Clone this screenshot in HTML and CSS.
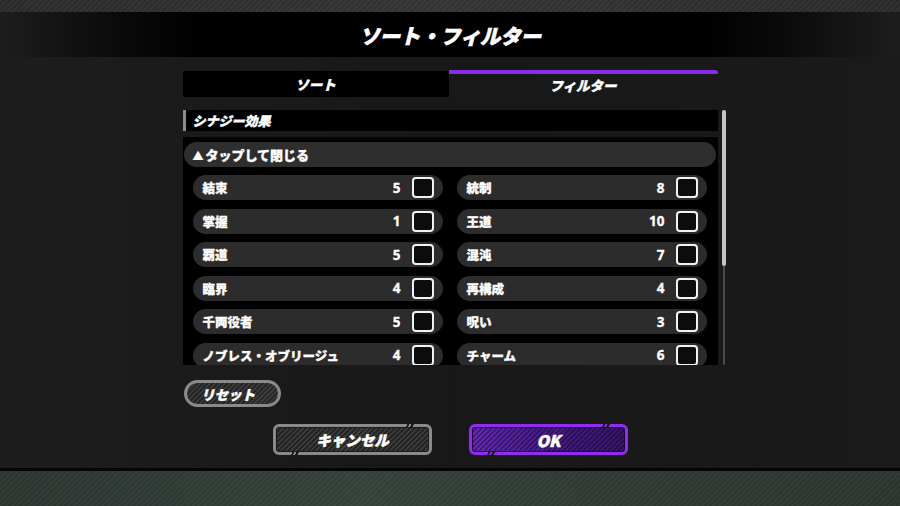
FILE: index.html
```html
<!DOCTYPE html>
<html lang="ja">
<head>
<meta charset="utf-8">
<title>ソート・フィルター</title>
<link rel="stylesheet" href="styles.css">
</head>
<body>
<div class="screen">
  <div class="topstrip"></div>
  <div class="panel">
    <div class="titlebar"><h1 class="title">ソート・フィルター</h1></div>
    <div class="inner">
      <div class="tabs">
        <div class="tab">ソート</div>
        <div class="tab active">フィルター</div>
      </div>
      <div class="content-row">
        <div class="content">
          <div class="sec-head">シナジー効果</div>
          <div class="list">
            <div class="collapse"><span class="tri">▲</span>タップして閉じる</div>
            <div class="grid">
              <div class="item"><span class="label">結束</span><span class="num">5</span><span class="check"></span></div>
              <div class="item"><span class="label">統制</span><span class="num">8</span><span class="check"></span></div>
              <div class="item"><span class="label">掌握</span><span class="num">1</span><span class="check"></span></div>
              <div class="item"><span class="label">王道</span><span class="num">10</span><span class="check"></span></div>
              <div class="item"><span class="label">覇道</span><span class="num">5</span><span class="check"></span></div>
              <div class="item"><span class="label">混沌</span><span class="num">7</span><span class="check"></span></div>
              <div class="item"><span class="label">臨界</span><span class="num">4</span><span class="check"></span></div>
              <div class="item"><span class="label">再構成</span><span class="num">4</span><span class="check"></span></div>
              <div class="item"><span class="label">千両役者</span><span class="num">5</span><span class="check"></span></div>
              <div class="item"><span class="label">呪い</span><span class="num">3</span><span class="check"></span></div>
              <div class="item"><span class="label">ノブレス・オブリージュ</span><span class="num">4</span><span class="check"></span></div>
              <div class="item"><span class="label">チャーム</span><span class="num">6</span><span class="check"></span></div>
            </div>
          </div>
        </div>
        <div class="scrollbar"><div class="thumb"></div></div>
      </div>
      <div class="reset-row"><div class="btn-reset">リセット</div></div>
    </div>
    <div class="actions">
      <div class="btn btn-cancel"><span class="btn-text">キャンセル</span></div>
      <div class="btn btn-ok"><span class="btn-text ok-text">OK</span></div>
    </div>
  </div>
  <div class="panel-edge"></div>
  <div class="ground"></div>
</div>
</body>
</html>
```
FILE: styles.css
```css
* { box-sizing: border-box; }
html, body { margin: 0; padding: 0; }
body {
  width: 900px;
  height: 506px;
  overflow: hidden;
  background: #2e3531;
  font-family: "Noto Sans CJK JP", "Noto Sans", sans-serif;
  color: #fff;
}
.screen {
  width: 900px;
  height: 506px;
  display: flex;
  flex-direction: column;
}
.topstrip {
  height: 12px;
  background:
    repeating-linear-gradient(135deg, rgba(255,255,255,0.04) 0 2px, rgba(0,0,0,0) 2px 4px),
    linear-gradient(to right, #2a2a2a, #333 50%, #2a2a2a);
}
.panel {
  height: 456px;
  background: linear-gradient(to right, #1d1d1d, #181818 50%, #1a1a1a);
  display: flex;
  flex-direction: column;
}
.titlebar {
  height: 45px;
  background: linear-gradient(to right, #1d1d1d 0, #0a0a0a 120px, #000 200px, #000 700px, #0a0a0a 780px, #1d1d1d 900px);
  display: flex;
  align-items: center;
  justify-content: center;
}
.title {
  margin: 0;
  font-size: 20.5px;
  font-weight: 900;
  font-style: italic;
  line-height: 1;
  letter-spacing: -0.3px;
  padding-top: 1px;
  -webkit-text-stroke: 0.6px #fff;
}
.inner {
  width: 535px;
  margin: 13px auto 0;
}
.tabs {
  display: flex;
  height: 27px;
}
.tab {
  flex: 0 0 266px;
  background: #000;
  border-radius: 2px;
  margin-top: 1px;
  display: flex;
  align-items: center;
  justify-content: center;
  font-size: 13.5px;
  font-weight: 900;
  font-style: italic;
  -webkit-text-stroke: 0.4px #fff;
}
.tab.active {
  flex: 0 0 269px;
  background: transparent;
  margin-top: 0;
  border-top: 4px solid #8a2be8;
  border-radius: 0 3px 0 0;
  padding-bottom: 2px;
}
.content-row {
  display: flex;
  gap: 4px;
  margin-top: 13px;
  margin-right: -9px;
}
.content {
  width: 535px;
  flex: 0 0 535px;
}
.sec-head {
  height: 21px;
  background: #000;
  border-left: 3px solid #8c8c8c;
  padding-left: 7px;
  display: flex;
  align-items: center;
  font-size: 13px;
  font-weight: 900;
  font-style: italic;
  -webkit-text-stroke: 0.4px #fff;
}
.list {
  margin-top: 6px;
  height: 228px;
  background: #000;
  overflow: hidden;
  padding: 5px 2px 0 1px;
}
.collapse {
  height: 25px;
  border-radius: 13px;
  background: #2e2e2e;
  display: flex;
  align-items: center;
  padding-left: 9px;
  font-size: 13px;
  font-weight: 900;
  -webkit-text-stroke: 0.3px #fff;
}
.tri {
  font-size: 11px;
  margin-right: 2px;
}
.grid {
  display: grid;
  grid-template-columns: 250px 250px;
  column-gap: 14px;
  row-gap: 8.5px;
  margin: 8px 0 0 9px;
}
.item {
  height: 25px;
  border-radius: 13px;
  background: #2c2c2c;
  display: flex;
  align-items: center;
  padding: 0 9px 0 10px;
}
.label {
  flex: 1;
  font-size: 12.5px;
  font-weight: 900;
  white-space: nowrap;
  -webkit-text-stroke: 0.3px #fff;
}
.num {
  font-size: 13.5px;
  font-weight: 700;
  margin-right: 11px;
  font-family: "Noto Sans", "Noto Sans CJK JP", sans-serif;
  -webkit-text-stroke: 0.3px #fff;
}
.check {
  width: 22px;
  height: 21px;
  border: 2px solid #f2f2f2;
  border-radius: 4px;
  background: #0c0c0c;
}
.scrollbar {
  width: 4px;
  flex: 0 0 4px;
  background: linear-gradient(to right, transparent 1px, #4a4a4a 1px 3px, transparent 3px);
  border-radius: 2px;
}
.thumb {
  height: 156px;
  background: #c4c4c4;
  border-radius: 2px;
}
.reset-row {
  margin-top: 15px;
  padding-left: 1px;
}
.btn-reset {
  width: 97px;
  height: 27px;
  border: 3px solid #8a8a8a;
  border-radius: 14px;
  background: repeating-linear-gradient(135deg, #262626 0 2px, #3c3c3c 2px 3.5px);
  display: flex;
  align-items: center;
  justify-content: center;
  font-size: 13.5px;
  font-weight: 900;
  font-style: italic;
  padding-right: 8px;
  -webkit-text-stroke: 0.4px #fff;
}
.actions {
  margin-top: 17px;
  display: flex;
  justify-content: center;
  gap: 37px;
  padding-left: 1px;
}
.btn {
  width: 159px;
  height: 31px;
  border: 3px solid #8a8a8a;
  border-radius: 6px;
  display: flex;
  align-items: center;
  justify-content: center;
  position: relative;
  font-size: 14.5px;
  font-weight: 900;
  font-style: italic;
  -webkit-text-stroke: 0.5px #fff;
}
.ok-text {
  font-size: 16px;
}
.btn-cancel {
  background: repeating-linear-gradient(135deg, #242424 0 2px, #3e3e3e 2px 3.5px);
  box-shadow: inset 0 0 0 1px #1a1a1a;
}
.btn-ok {
  border-color: #8f2cf0;
  background:
    repeating-linear-gradient(135deg, rgba(0,0,0,0.35) 0 2px, rgba(0,0,0,0) 2px 3.5px),
    linear-gradient(to right, #6a2bc4, #4a1c8e 50%, #3b1672);
  box-shadow: inset 0 0 0 1px #1d0b38;
}
.btn::before, .btn::after {
  content: "";
  position: absolute;
  width: 10px;
  height: 3px;
  background: repeating-linear-gradient(115deg, transparent 0 2px, #1a1a1a 2px 4px);
}
.btn::before { top: -3px; right: 14px; }
.btn::after { bottom: -3px; left: 14px; }
.panel-edge {
  height: 3px;
  background: #050505;
}
.ground {
  flex: 1;
  background:
    repeating-linear-gradient(135deg, rgba(255,255,255,0.03) 0 2px, rgba(0,0,0,0) 2px 4px),
    linear-gradient(to right, #2c3430, #34403a 40%, #2f3833 70%, #2c3430);
}
```
